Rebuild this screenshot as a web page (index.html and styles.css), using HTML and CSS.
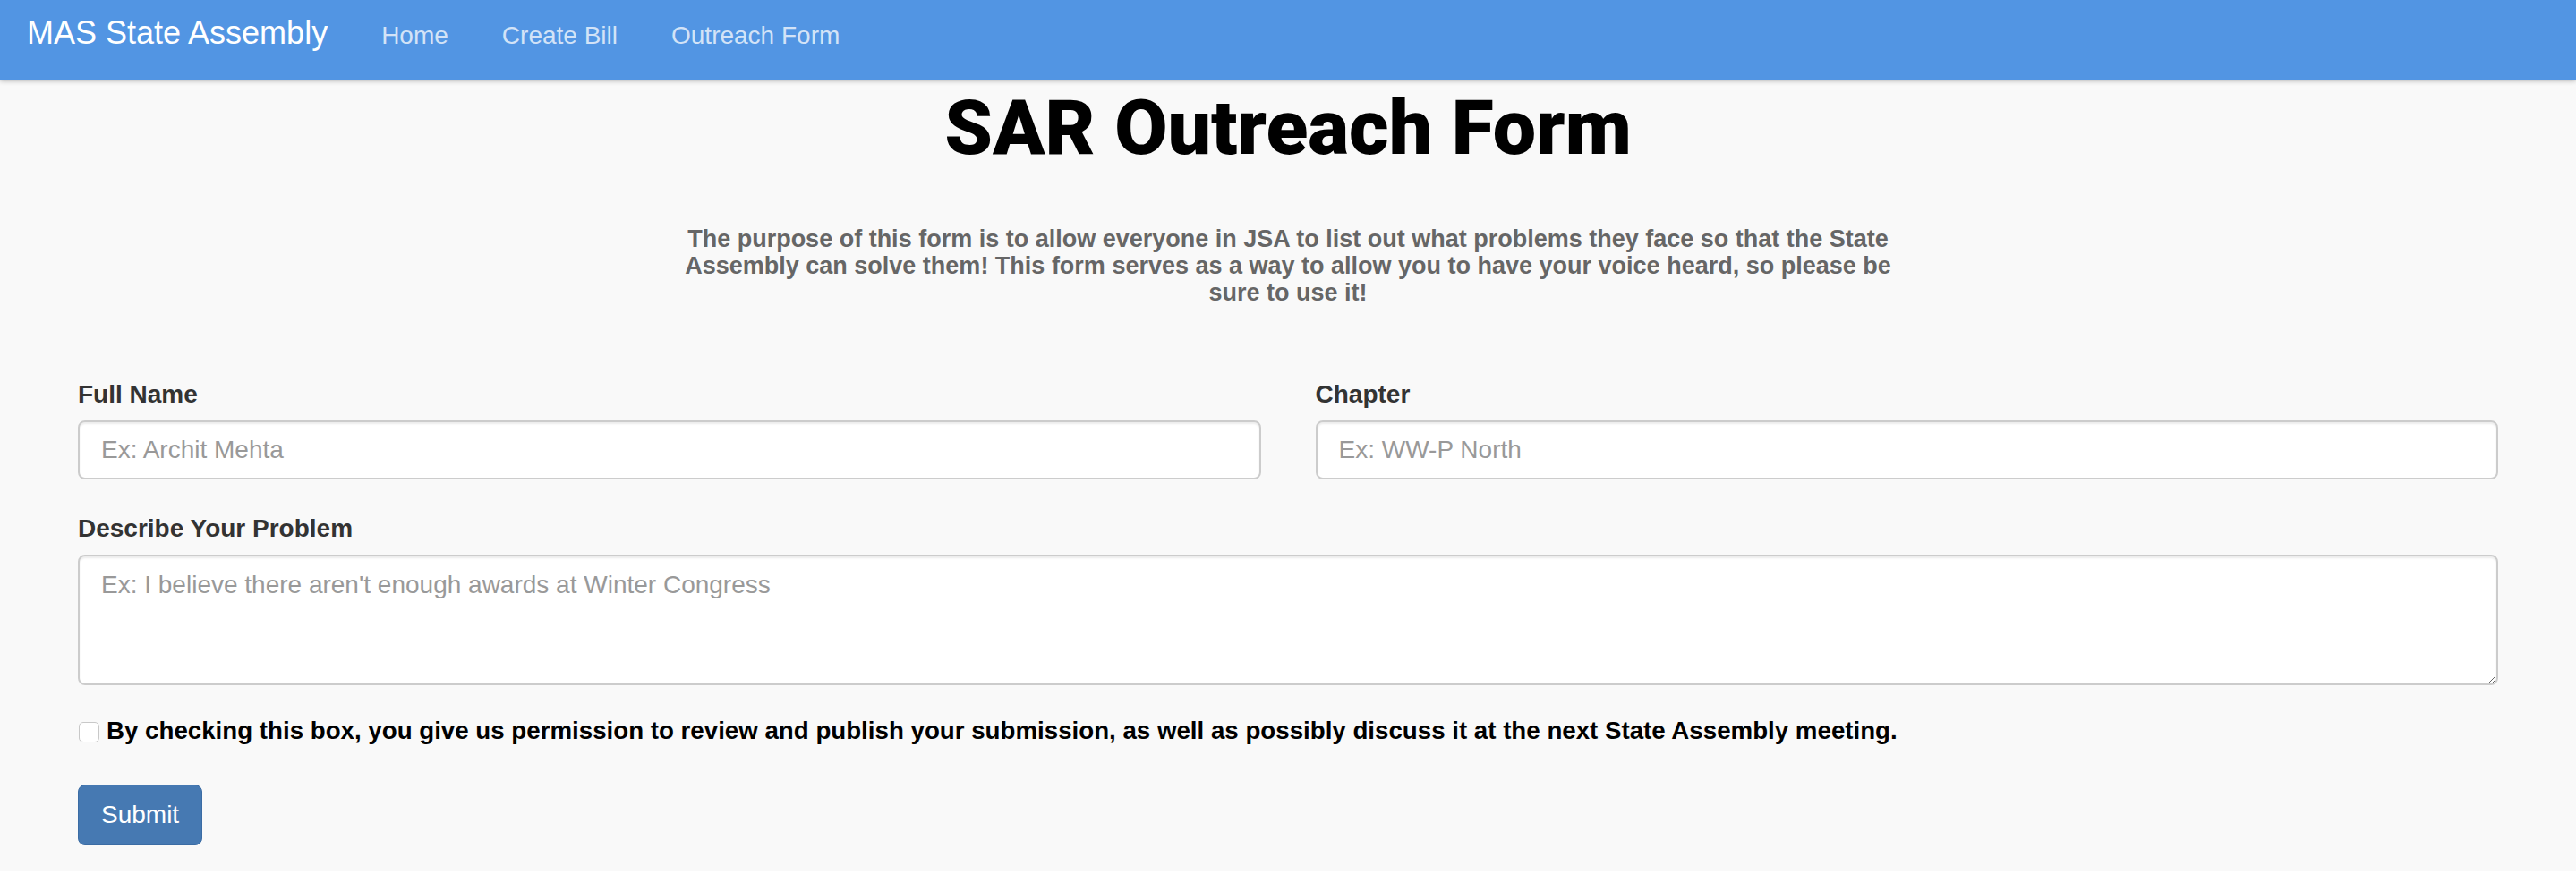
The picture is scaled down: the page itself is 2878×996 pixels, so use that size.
FILE: index.html
```html
<!DOCTYPE html>
<html lang="en">
<head>
<meta charset="utf-8">
<title>SAR Outreach Form</title>
<link rel="stylesheet" href="styles.css">
</head>
<body>
<nav class="navbar">
  <a class="brand" href="#">MAS State Assembly</a>
  <a class="nav-link" href="#">Home</a>
  <a class="nav-link" href="#">Create Bill</a>
  <a class="nav-link" href="#">Outreach Form</a>
</nav>
<main class="page">
  <h1 class="title">SAR Outreach Form</h1>
  <p class="intro">The purpose of this form is to allow everyone in JSA to list out what problems they face so that the State Assembly can solve them! This form serves as a way to allow you to have your voice heard, so please be sure to use it!</p>
  <form class="form">
    <div class="row">
      <div class="field">
        <label class="label" for="name">Full Name</label>
        <input class="control" id="name" type="text" placeholder="Ex: Archit Mehta">
      </div>
      <div class="field">
        <label class="label" for="chapter">Chapter</label>
        <input class="control" id="chapter" type="text" placeholder="Ex: WW-P North">
      </div>
    </div>
    <div class="field">
      <label class="label" for="problem">Describe Your Problem</label>
      <textarea class="control area" id="problem" placeholder="Ex: I believe there aren't enough awards at Winter Congress"></textarea>
    </div>
    <label class="check">
      <input class="box" type="checkbox">
      <span>By checking this box, you give us permission to review and publish your submission, as well as possibly discuss it at the next State Assembly meeting.</span>
    </label>
    <button class="submit" type="submit">Submit</button>
  </form>
</main>
</body>
</html>
```
FILE: styles.css
```css
* { box-sizing: border-box; }

body {
  margin: 0;
  background: #ffffff;
  font-family: "Liberation Sans", Arial, Helvetica, sans-serif;
  color: #333333;
}

.navbar {
  position: relative;
  z-index: 2;
  display: flex;
  align-items: baseline;
  height: 89px;
  padding: 9px 0 0 0;
  background: #5295e3;
  box-shadow: 0 2px 5px rgba(0, 0, 0, 0.22);
}

.brand {
  font-size: 36px;
  line-height: 40px;
  color: #ffffff;
  text-decoration: none;
  padding: 8px 30px 8px 30px;
}

.nav-link {
  font-size: 28px;
  line-height: 40px;
  color: #d3e3f7;
  text-decoration: none;
  padding: 8px 30px;
}

.page {
  background: #f9f9f9;
  padding: 10px 0 29px;
}

.title {
  margin: 0;
  text-align: center;
  font-family: Roboto, "Liberation Sans", sans-serif;
  font-weight: 900;
  font-size: 86px;
  line-height: 88px;
  color: #000000;
}

.intro {
  max-width: 1400px;
  margin: 65px auto 0;
  text-align: center;
  font-size: 27px;
  line-height: 30px;
  font-weight: bold;
  color: #666666;
}

.form {
  max-width: 2704px;
  margin: 79px auto 0;
}

.row {
  display: grid;
  grid-template-columns: 1fr 1fr;
  column-gap: 61px;
}

.field {
  display: flex;
  flex-direction: column;
  margin-bottom: 35px;
}

.label {
  font-size: 28px;
  line-height: 40px;
  font-weight: bold;
  color: #333333;
  margin-bottom: 9px;
}

.control {
  display: block;
  width: 100%;
  height: 66px;
  padding: 12px 24px;
  font-family: "Liberation Sans", Arial, sans-serif;
  font-size: 28px;
  line-height: 40px;
  color: #555555;
  background: #ffffff;
  border: 2px solid #cccccc;
  border-radius: 8px;
  box-shadow: inset 0 2px 2px rgba(0, 0, 0, 0.075);
}

.control::placeholder {
  color: #999999;
}

.area {
  height: 146px;
  resize: vertical;
}

.field:last-of-type {
  margin-bottom: 0;
}

.check {
  display: flex;
  align-items: center;
  gap: 8px;
  margin-top: 31px;
  font-size: 27.7px;
  line-height: 40px;
  font-weight: bold;
  color: #000000;
}

.box {
  appearance: none;
  -webkit-appearance: none;
  flex: none;
  width: 23px;
  height: 23px;
  margin: 2px 0 0 1px;
  background: #ffffff;
  border: 1.5px solid #c8c8c8;
  border-radius: 5px;
}

.submit {
  display: block;
  margin-top: 40px;
  height: 68px;
  padding: 0 25px;
  font-family: "Liberation Sans", Arial, sans-serif;
  font-size: 28px;
  line-height: 40px;
  color: #ffffff;
  background: #4679b2;
  border: 1px solid #3b6ca4;
  border-radius: 8px;
}
```
